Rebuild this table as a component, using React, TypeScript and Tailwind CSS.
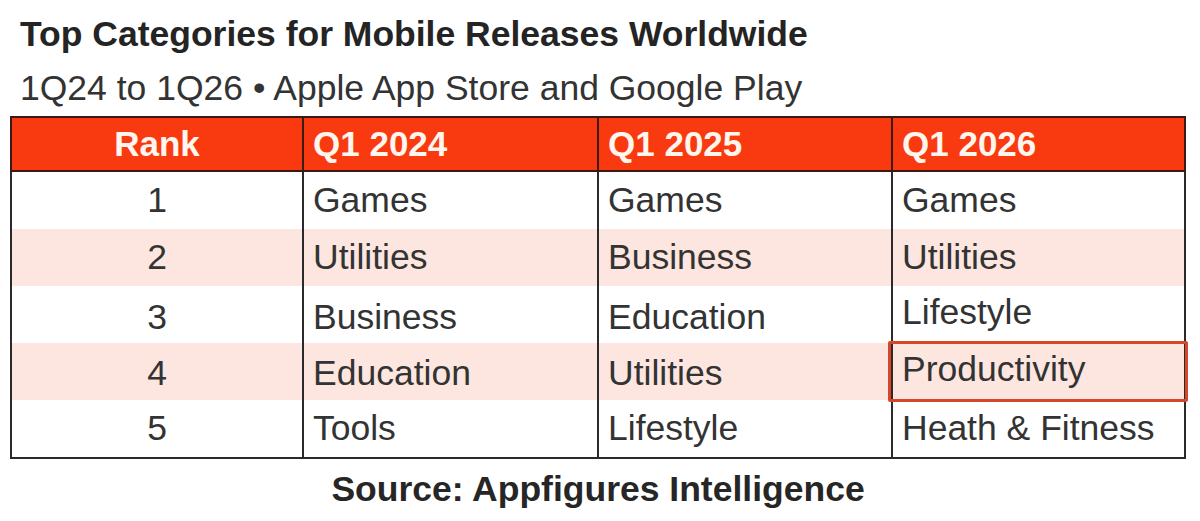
import React from "react";

const rows: string[][] = [
  ["1", "Games", "Games", "Games"],
  ["2", "Utilities", "Business", "Utilities"],
  ["3", "Business", "Education", "Lifestyle"],
  ["4", "Education", "Utilities", "Productivity"],
  ["5", "Tools", "Lifestyle", "Heath & Fitness"],
];

const cols = "grid grid-cols-[292px_295px_294px_295px]";

export default function App() {
  return (
    <div
      className="w-[1200px] h-[521px] bg-white overflow-hidden"
      style={{ fontFamily: '"Liberation Sans", Arial, sans-serif' }}
    >
      <div className="pt-[14px] pl-[20px]">
        <div className="text-[35.5px] leading-[40px] font-bold text-[#242424] whitespace-nowrap">
          Top Categories for Mobile Releases Worldwide
        </div>
        <div className="mt-[14px] text-[35.5px] leading-[40px] text-[#333] whitespace-nowrap">
          1Q24 to 1Q26 • Apple App Store and Google Play
        </div>
      </div>
      <div className="ml-[10px] mt-[8px] w-[1176px]">
        <div className={`${cols} h-[56px] bg-[#f93a10] border-2 border-[#3a1a12] font-bold text-[35px] text-[#fff6ee]`}>
          <div className="flex items-center justify-center border-r-2 border-[#3a1a12]">Rank</div>
          <div className="flex items-center pl-[9px] border-r-2 border-[#3a1a12]">Q1 2024</div>
          <div className="flex items-center pl-[9px] border-r-2 border-[#3a1a12]">Q1 2025</div>
          <div className="flex items-center pl-[9px]">Q1 2026</div>
        </div>
        <div className="border-x-2 border-b-2 border-[#2a2a2a]">
          {rows.map((r, i) => (
            <div
              key={i}
              className={`${cols} h-[57px] text-[35.5px] text-[#333] ${i % 2 === 1 ? "bg-[#fde6df]" : "bg-white"}`}
            >
              <div className="flex items-center justify-center border-r-2 border-[#2a2a2a]">{r[0]}</div>
              <div className="flex items-center pl-[9px] border-r-2 border-[#2a2a2a]">{r[1]}</div>
              <div className="flex items-center pl-[9px] border-r-2 border-[#2a2a2a]">{r[2]}</div>
              <div className={`relative flex items-center pl-[9px] ${i === 2 ? "pb-[9px]" : i === 3 ? "pb-[8px]" : ""}`}>
                {r[3]}
                {i === 3 && (
                  <div className="absolute left-[-5px] right-[0px] top-[-2px] bottom-[2px] border-[3px] border-[#d4472b] rounded-[2px]" />
                )}
              </div>
            </div>
          ))}
        </div>
      </div>
      <div className="mt-[10px] text-center text-[35.5px] leading-[40px] font-bold text-[#262626] w-[1196px]">
        Source: Appfigures Intelligence
      </div>
    </div>
  );
}
